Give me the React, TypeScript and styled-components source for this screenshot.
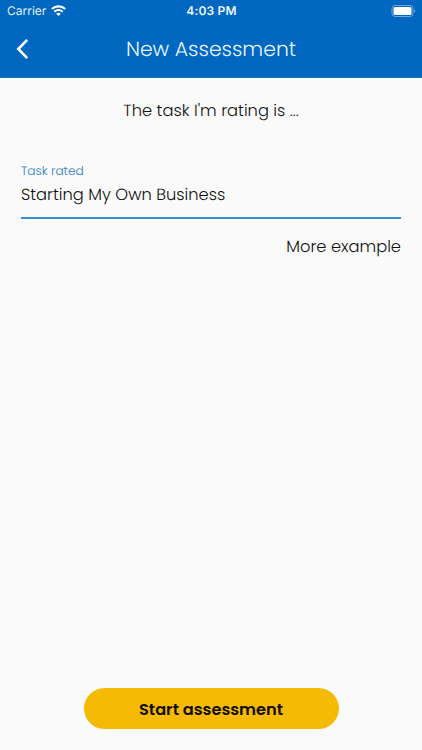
import React from "react";
import styled, { createGlobalStyle } from "styled-components";

const GlobalStyle = createGlobalStyle`
  * { box-sizing: border-box; }
  body { margin: 0; background: #fafafa; }
`;

const Screen = styled.div`
  display: flex;
  flex-direction: column;
  height: 750px;
  background: #fafafa;
  color: #111;
  font-family: Poppins, Inter, sans-serif;
  text-rendering: geometricPrecision;
`;

const Header = styled.header`
  height: 78px;
  flex: none;
  background: #0067c0;
  border-bottom: 1px solid #1b73c1;
  color: #fff;
`;

const StatusBar = styled.div`
  display: grid;
  grid-template-columns: 1fr auto 1fr;
  align-items: center;
  height: 21px;
  padding: 0 6px 0 7px;
  font-family: Inter, sans-serif;
`;

const Carrier = styled.div`
  display: flex;
  align-items: center;
  gap: 5px;
  font-size: 12px;
  line-height: 15px;
  color: #e4f0fb;
`;

const Clock = styled.div`
  font-size: 12px;
  line-height: 15px;
  font-weight: 600;
  letter-spacing: 0.2px;
  color: #edf6ff;
`;

const Battery = styled.svg`
  justify-self: end;
`;

const NavBar = styled.div`
  display: grid;
  grid-template-columns: 46px 1fr 46px;
  align-items: center;
  height: 56px;
`;

const BackButton = styled.button`
  display: flex;
  padding: 0 0 0 16px;
  border: 0;
  background: none;
`;

const Title = styled.h1`
  margin: 0;
  padding-top: 2px;
  text-align: center;
  font-size: 20.4px;
  line-height: 28px;
  font-weight: 300;
  color: #e8f4ff;
`;

const Content = styled.main`
  flex: 1;
  display: flex;
  flex-direction: column;
  padding: 20px 21px 0;
`;

const Prompt = styled.p`
  margin: 0;
  text-align: center;
  font-size: 16.3px;
  line-height: 25px;
  font-weight: 300;
`;

const Field = styled.div`
  display: flex;
  flex-direction: column;
  height: 58px;
  margin-top: 38px;
  border-bottom: 2px solid #3290cc;
`;

const Label = styled.label`
  padding-top: 1px;
  font-size: 12.2px;
  line-height: 19px;
  font-weight: 300;
  color: #2f80c8;
`;

const Value = styled.div`
  margin-top: 1px;
  font-size: 16.3px;
  line-height: 25px;
  font-weight: 300;
`;

const MoreLink = styled.a`
  align-self: flex-end;
  margin-top: 15px;
  font-size: 16.3px;
  line-height: 25px;
  font-weight: 300;
`;

const StartButton = styled.button`
  align-self: center;
  width: 255px;
  height: 41px;
  margin: auto 0 21px;
  padding: 1px 0 0;
  border: 0;
  border-radius: 21px;
  background: #f5ba03;
  color: #100c00;
  font: inherit;
  font-size: 16.2px;
  line-height: 25px;
  font-weight: 600;
`;

export default function App() {
  return (
    <Screen>
      <GlobalStyle />
      <Header>
        <StatusBar>
          <Carrier>
            <span>Carrier</span>
            <svg width="15" height="11" viewBox="0 0 15 11" fill="none" stroke="#fff">
              <path d="M.8 4.1a9.7 9.7 0 0 1 13.4 0" strokeWidth="2.1" />
              <path d="M3.3 6.7a6.1 6.1 0 0 1 8.4 0" strokeWidth="1.9" />
              <path d="M5.2 8.7a3.4 3.4 0 0 1 4.6 0L7.5 11z" fill="#fff" stroke="none" />
            </svg>
          </Carrier>
          <Clock>4:03 PM</Clock>
          <Battery width="25" height="12" viewBox="0 0 25 12">
            <rect x="1" y=".5" width="21" height="11" rx="3" fill="none" stroke="#6fa9de" />
            <rect x="2.5" y="2" width="18" height="8" rx="1.5" fill="#fff" />
            <path d="M23.3 4.3v3.4c1.3-.5 1.3-2.9 0-3.4z" fill="#7fb3e2" />
          </Battery>
        </StatusBar>
        <NavBar>
          <BackButton aria-label="Back">
            <svg width="13" height="20" viewBox="0 0 13 20" fill="none" stroke="#fff" strokeWidth="2.6">
              <path d="M11.2.9 2.3 10l8.9 9.1" />
            </svg>
          </BackButton>
          <Title>New Assessment</Title>
        </NavBar>
      </Header>
      <Content>
        <Prompt>The task I'm rating is ...</Prompt>
        <Field>
          <Label>Task rated</Label>
          <Value>Starting My Own Business</Value>
        </Field>
        <MoreLink>More example</MoreLink>
        <StartButton>Start assessment</StartButton>
      </Content>
    </Screen>
  );
}
